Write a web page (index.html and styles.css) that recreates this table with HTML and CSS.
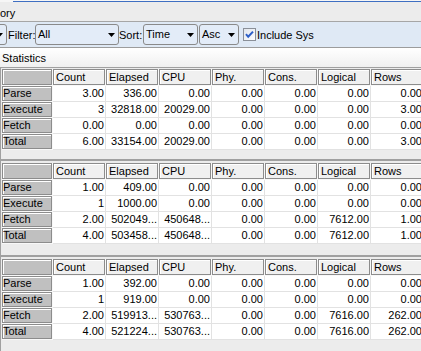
FILE: index.html
```html
<!DOCTYPE html>
<html>
<head>
<meta charset="utf-8">
<link rel="stylesheet" href="styles.css">
</head>
<body>
<div class="topline"><div class="blue"></div></div>
<div class="titlebar">ory</div>
<div class="toolbar">
  <div class="combo combo-cut"><svg class="arrow" width="7" height="4" viewBox="0 0 7 4"><polygon points="0,0 7,0 3.5,4" fill="#000"/></svg></div>
  <span class="lbl lbl-filter">Filter:</span>
  <div class="combo combo-filter"><span class="val">All</span><svg class="arrow" width="7" height="4" viewBox="0 0 7 4"><polygon points="0,0 7,0 3.5,4" fill="#000"/></svg></div>
  <span class="lbl lbl-sort">Sort:</span>
  <div class="combo combo-sort"><span class="val">Time</span><svg class="arrow" width="7" height="4" viewBox="0 0 7 4"><polygon points="0,0 7,0 3.5,4" fill="#000"/></svg></div>
  <div class="combo combo-order"><span class="val">Asc</span><svg class="arrow" width="7" height="4" viewBox="0 0 7 4"><polygon points="0,0 7,0 3.5,4" fill="#000"/></svg></div>
  <svg class="check" width="13" height="13" viewBox="0 0 13 13">
    <defs><linearGradient id="cg" x1="0" y1="0" x2="1" y2="1"><stop offset="0" stop-color="#dfe4ec"/><stop offset="1" stop-color="#ffffff"/></linearGradient></defs>
    <rect x="0.5" y="0.5" width="12" height="12" fill="url(#cg)" stroke="#8a8f98"/>
    <path d="M3 6.2 L5.2 8.8 L10 3.6" fill="none" stroke="#2d5fc8" stroke-width="2"/>
  </svg>
  <span class="lbl lbl-sys">Include Sys</span>
</div>
<div class="statbar">Statistics</div>

<div class="section first">
<table>
  <tr><th><div class="hd corner"></div></th><th><div class="hd">Count</div></th><th><div class="hd">Elapsed</div></th><th><div class="hd">CPU</div></th><th><div class="hd">Phy.</div></th><th><div class="hd">Cons.</div></th><th><div class="hd">Logical</div></th><th><div class="hd">Rows</div></th></tr>
  <tr><td class="rhc"><div class="rh">Parse</div></td><td>3.00</td><td>336.00</td><td>0.00</td><td>0.00</td><td>0.00</td><td>0.00</td><td>0.00</td></tr>
  <tr><td class="rhc"><div class="rh">Execute</div></td><td>3</td><td>32818.00</td><td>20029.00</td><td>0.00</td><td>0.00</td><td>0.00</td><td>3.00</td></tr>
  <tr><td class="rhc"><div class="rh">Fetch</div></td><td>0.00</td><td>0.00</td><td>0.00</td><td>0.00</td><td>0.00</td><td>0.00</td><td>0.00</td></tr>
  <tr><td class="rhc"><div class="rh">Total</div></td><td>6.00</td><td>33154.00</td><td>20029.00</td><td>0.00</td><td>0.00</td><td>0.00</td><td>3.00</td></tr>
</table>
</div>

<div class="section">
<table>
  <tr><th><div class="hd corner"></div></th><th><div class="hd">Count</div></th><th><div class="hd">Elapsed</div></th><th><div class="hd">CPU</div></th><th><div class="hd">Phy.</div></th><th><div class="hd">Cons.</div></th><th><div class="hd">Logical</div></th><th><div class="hd">Rows</div></th></tr>
  <tr><td class="rhc"><div class="rh">Parse</div></td><td>1.00</td><td>409.00</td><td>0.00</td><td>0.00</td><td>0.00</td><td>0.00</td><td>0.00</td></tr>
  <tr><td class="rhc"><div class="rh">Execute</div></td><td>1</td><td>1000.00</td><td>0.00</td><td>0.00</td><td>0.00</td><td>0.00</td><td>0.00</td></tr>
  <tr><td class="rhc"><div class="rh">Fetch</div></td><td>2.00</td><td>502049...</td><td>450648...</td><td>0.00</td><td>0.00</td><td>7612.00</td><td>1.00</td></tr>
  <tr><td class="rhc"><div class="rh">Total</div></td><td>4.00</td><td>503458...</td><td>450648...</td><td>0.00</td><td>0.00</td><td>7612.00</td><td>1.00</td></tr>
</table>
</div>

<div class="section">
<table>
  <tr><th><div class="hd corner"></div></th><th><div class="hd">Count</div></th><th><div class="hd">Elapsed</div></th><th><div class="hd">CPU</div></th><th><div class="hd">Phy.</div></th><th><div class="hd">Cons.</div></th><th><div class="hd">Logical</div></th><th><div class="hd">Rows</div></th></tr>
  <tr><td class="rhc"><div class="rh">Parse</div></td><td>1.00</td><td>392.00</td><td>0.00</td><td>0.00</td><td>0.00</td><td>0.00</td><td>0.00</td></tr>
  <tr><td class="rhc"><div class="rh">Execute</div></td><td>1</td><td>919.00</td><td>0.00</td><td>0.00</td><td>0.00</td><td>0.00</td><td>0.00</td></tr>
  <tr><td class="rhc"><div class="rh">Fetch</div></td><td>2.00</td><td>519913...</td><td>530763...</td><td>0.00</td><td>0.00</td><td>7616.00</td><td>262.00</td></tr>
  <tr><td class="rhc"><div class="rh">Total</div></td><td>4.00</td><td>521224...</td><td>530763...</td><td>0.00</td><td>0.00</td><td>7616.00</td><td>262.00</td></tr>
</table>
</div>
</body>
</html>
```
FILE: styles.css
```css
* { box-sizing: border-box; }
html, body { margin: 0; padding: 0; }
body {
  width: 421px;
  height: 351px;
  overflow: hidden;
  background: #ececec;
  font-family: "Liberation Sans", Arial, sans-serif;
  font-size: 11px;
  color: #000;
}
.topline {
  height: 2px;
  padding-top: 1px;
  padding-left: 13px;
  background: #f6f6f6;
}
.topline .blue { height: 1px; background: #3f6fc2; }
.titlebar {
  height: 20px;
  padding-top: 3px;
  line-height: 16px;
  background: #ececec;
  border-bottom: 1px solid #a6a6a6;
}
.toolbar {
  height: 26px;
  display: flex;
  align-items: center;
  background: #dfe9f5;
  border-bottom: 1px solid #9c9c9c;
  white-space: nowrap;
  overflow: hidden;
}
.combo {
  flex: none;
  height: 21px;
  display: flex;
  align-items: center;
  padding-left: 2px;
  padding-right: 3px;
  border: 1px solid #8a8a8a;
  border-radius: 3px;
  background: #e3ecf8;
}
.combo .val { flex: 1; line-height: 19px; }
.combo .arrow { flex: none; margin-left: auto; }
.combo-cut { width: 30px; margin-left: -23px; }
.combo-filter { width: 84px; }
.combo-sort { width: 55px; }
.combo-order { width: 40px; margin-left: 1px; }
.lbl { flex: none; }
.lbl-filter { width: 27px; margin-left: 1px; }
.lbl-sort { width: 24px; }
.check { flex: none; margin-left: 4px; }
.lbl-sys { margin-left: 1px; }
.statbar {
  height: 19px;
  padding-left: 2px;
  padding-top: 1px;
  line-height: 18px;
  background: linear-gradient(#ffffff, #f0f0f0);
}
.section {
  border-left: 1px solid #a0a0a0;
  border-top: 2px solid #a0a0a0;
  padding: 2px 0 11px 1px;
  overflow: hidden;
  background: #ececec;
}
.section.first {
  border-top-width: 1px;
  padding-top: 1px;
  padding-bottom: 9px;
}
table {
  border-collapse: separate;
  border-spacing: 0;
  table-layout: fixed;
  width: 422px;
  background: #f8f8f8;
}
th, td { padding: 0; }
th {
  height: 17px;
  width: 53px;
  padding: 0 1px 1px 0;
  font-weight: normal;
  text-align: left;
  vertical-align: top;
}
th:first-child { width: 51px; }
.hd {
  height: 16px;
  border: 1px solid #8c8c8c;
  background: #f0f0f0;
  box-shadow: inset 1px 1px #ffffff;
  padding-left: 2px;
  line-height: 14px;
  white-space: nowrap;
  overflow: hidden;
}
.hd.corner { background: #c0c0c0; }
td {
  height: 16px;
  background: #ffffff;
  border-right: 1px solid #e2e2e2;
  border-bottom: 1px solid #e2e2e2;
  text-align: right;
  padding-right: 1px;
  line-height: 15px;
  white-space: nowrap;
  overflow: hidden;
}
td.rhc {
  background: #f8f8f8;
  border: none;
  padding: 0 1px 1px 0;
  text-align: left;
  vertical-align: top;
}
.rh {
  height: 15px;
  border: 1px solid #8c8c8c;
  background: #c0c0c0;
  box-shadow: inset 1px 1px #ffffff;
  line-height: 13px;
  white-space: nowrap;
  overflow: hidden;
}
```
